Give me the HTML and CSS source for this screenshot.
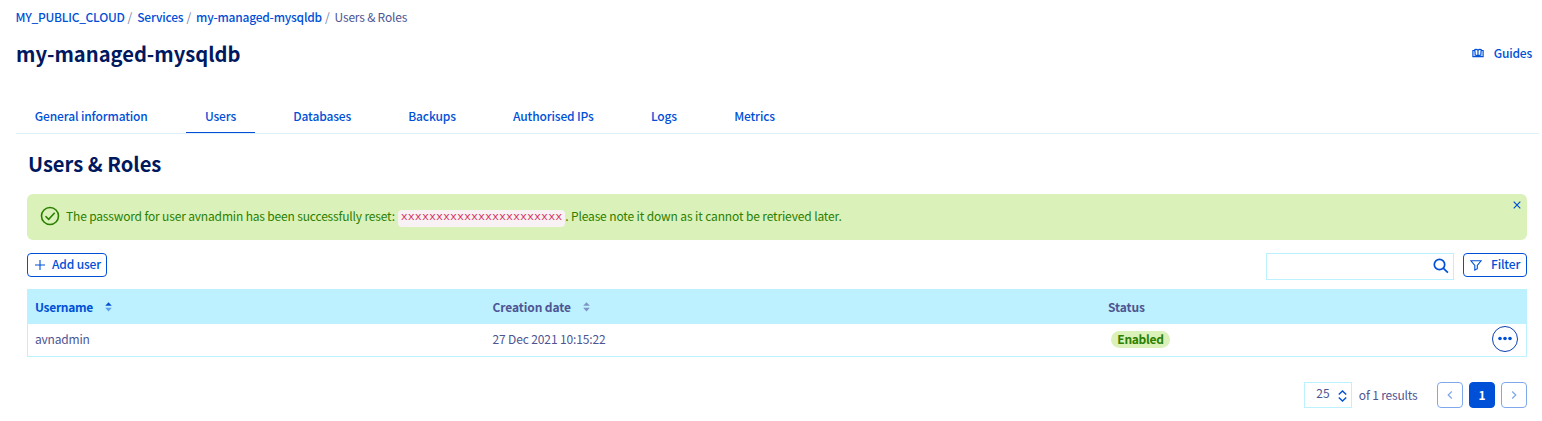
FILE: index.html
```html
<!DOCTYPE html>
<html lang="en">
<head>
<meta charset="utf-8">
<title>my-managed-mysqldb - Users &amp; Roles</title>
<link rel="stylesheet" href="styles.css">
</head>
<body>
<nav class="breadcrumb">
  <a class="crumb crumb-project">MY_PUBLIC_CLOUD</a><span class="sep">/</span>
  <a class="crumb crumb-services">Services</a><span class="sep">/</span>
  <a class="crumb crumb-db">my-managed-mysqldb</a><span class="sep">/</span>
  <span class="current">Users &amp; Roles</span>
</nav>
<header class="page-header">
  <h1>my-managed-mysqldb</h1>
  <a class="guides">
    <svg width="12" height="10" viewBox="0 0 12 10" fill="none" stroke="currentColor"><path d="M2.8 2.5H.9V8.6H11.1V2.5H9.2M3.2 7.2L2.8 1.6Q5 .8 6 2.4Q7 .8 9.2 1.6L8.8 7.2Q7 7 6 8.4Q5 7 3.2 7.2ZM6 2.2V8.4" stroke-width="1.2"/></svg>
    <span>Guides</span>
  </a>
</header>
<nav class="tabs">
  <a class="tab"><span>General information</span></a>
  <a class="tab active"><span>Users</span></a>
  <a class="tab"><span>Databases</span></a>
  <a class="tab"><span>Backups</span></a>
  <a class="tab"><span>Authorised IPs</span></a>
  <a class="tab"><span>Logs</span></a>
  <a class="tab"><span>Metrics</span></a>
</nav>
<main>
  <h2>Users &amp; Roles</h2>
  <div class="alert">
    <svg class="check" width="20" height="20" viewBox="0 0 20 20" fill="none" stroke="currentColor" stroke-width="1.6"><circle cx="10" cy="10" r="8.5"/><path d="M5.5 10.2l3.2 3.1 6-6.6"/></svg>
    <p><span class="msg-a">The password for user avnadmin has been successfully reset:</span><code>xxxxxxxxxxxxxxxxxxxxxxx</code><span class="msg-b">. Please note it down as it cannot be retrieved later.</span></p>
    <svg class="close" width="8" height="8" viewBox="0 0 8 8" stroke="currentColor" stroke-width="1.2"><path d="M.7.7l6.6 6.6M7.3.7L.7 7.3"/></svg>
  </div>
  <div class="toolbar">
    <button class="btn add"><svg width="10" height="10" viewBox="0 0 10 10" stroke="currentColor" stroke-width="1.1"><path d="M5 0v10M0 5h10"/></svg><span>Add user</span></button>
    <div class="search"><svg width="16" height="16" viewBox="0 0 16 16" fill="none" stroke="currentColor" stroke-width="1.7"><circle cx="6.5" cy="6.5" r="5.2"/><path d="M10.2 10.2l4.7 4.5"/></svg></div>
    <button class="btn filter"><svg width="12" height="11" viewBox="0 0 12 11" fill="none" stroke="currentColor" stroke-width="1.1"><path d="M.9.8h10.2L7.3 5.4v3.3L4.8 10V5.4Z"/></svg><span>Filter</span></button>
  </div>
  <div class="table">
    <div class="row head">
      <div class="cell sorted"><span class="th-user">Username</span><svg width="7" height="10" viewBox="0 0 7 10" fill="currentColor"><path d="M3.5.2L6.8 3.8H.2Z"/><path opacity=".5" d="M.2 5.8H6.8L3.5 9.4Z"/></svg></div>
      <div class="cell"><span class="th-date">Creation date</span><svg class="muted" width="7" height="10" viewBox="0 0 7 10" fill="currentColor"><path d="M3.5.2L6.8 3.8H.2ZM.2 5.8H6.8L3.5 9.4Z"/></svg></div>
      <div class="cell"><span class="th-status">Status</span></div>
      <div></div>
    </div>
    <div class="row body">
      <div class="cell"><span class="td-user">avnadmin</span></div>
      <div class="cell"><span class="td-date">27 Dec 2021 10:15:22</span></div>
      <div class="cell"><span class="badge">Enabled</span></div>
      <div class="actions"><svg width="26" height="26" viewBox="0 0 26 26"><circle cx="13" cy="13" r="12.5" fill="none" stroke="#0b3fae"/><g fill="#0050d7"><circle cx="8" cy="12.5" r="1.8"/><circle cx="13" cy="12.5" r="1.8"/><circle cx="18" cy="12.5" r="1.8"/></g></svg></div>
    </div>
  </div>
  <div class="pagination">
    <div class="select"><span>25</span><svg width="9" height="12" viewBox="0 0 9 12" fill="none" stroke="currentColor" stroke-width="1.4"><path d="M.8 4.6L4.5 1l3.7 3.6M.8 7.4L4.5 11l3.7-3.6"/></svg></div>
    <span class="total">of 1 results</span>
    <div class="page"><svg width="6" height="8" viewBox="0 0 6 8" fill="none" stroke="currentColor" stroke-width="1.2"><path d="M4.8.5L1.2 4l3.6 3.5"/></svg></div>
    <div class="page current-page">1</div>
    <div class="page"><svg width="6" height="8" viewBox="0 0 6 8" fill="none" stroke="currentColor" stroke-width="1.2"><path d="M1.2.5L4.8 4 1.2 7.5"/></svg></div>
  </div>
</main>
</body>
</html>
```
FILE: styles.css
```css
* { box-sizing: border-box; }
body {
  margin: 0;
  padding: 8px 15px 0 16px;
  background: #fff;
  color: #4d5592;
  font-family: "Noto Sans CJK SC", "Noto Sans", sans-serif;
  font-size: 12px;
  line-height: 18px;
}
h1, h2, p { margin: 0; }
svg { display: block; flex: none; }
.breadcrumb { display: flex; height: 18px; margin-left: -.5px; white-space: nowrap; letter-spacing: -.2px; }
.crumb { color: #0050d7; font-weight: 500; }
.crumb-project { letter-spacing: -.27px; }
.crumb-db { letter-spacing: -.23px; }
.sep { margin: 0 5.2px 0 3px; color: #7a80aa; }
.page-header { display: flex; justify-content: space-between; height: 56px; padding-top: 12px; }
h1, h2 { color: #00185e; font-size: 20.15px; line-height: 32px; font-weight: 700; }
.guides { display: flex; align-items: center; gap: 9.5px; height: 30px; margin-right: -5px; color: #0050d7; font-weight: 500; letter-spacing: -.2px; }
.tabs { display: flex; gap: 19.4px; height: 52px; margin-right: -12px; padding-top: 18px; border-bottom: 1px solid #e0f0fa; }
.tab { height: 33px; padding: 7px 19px 0 18.8px; color: #0050d7; font-weight: 500; letter-spacing: -.14px; white-space: nowrap; }
.tab.active { border-bottom: 1px solid #0050d7; }
main { padding-left: 11px; }
h2 { margin-top: 14px; padding-left: 1px; }
.alert { display: flex; align-items: center; height: 46px; margin-top: 14px; padding: 0 6px 0 13px; border-radius: 6px; background: #daf1b9; color: #2b8000; }
.check { margin-top: -2px; }
.alert p { display: flex; align-items: center; margin: -2px 0 0 6px; white-space: nowrap; }
.msg-a { letter-spacing: -.165px; }
.msg-b { letter-spacing: -.13px; }
.alert code { height: 17px; margin: 4px 0 0 3px; padding: 0 3px; border-radius: 4px; background: #f9f2f4; color: #d3335f; font: 11.7px/15px "Liberation Mono", monospace; }
.close { align-self: flex-start; margin: 7px 0 0 auto; color: #0050d7; }
.toolbar { display: flex; height: 28px; margin-top: 13px; }
.btn { display: flex; align-items: center; height: 24px; padding: 0; border: 1px solid #0050d7; border-radius: 4px; background: #fff; color: #0050d7; font: 500 12px/18px "Noto Sans CJK SC", "Noto Sans", sans-serif; letter-spacing: -.15px; white-space: nowrap; }
.btn span { margin-top: -2px; }
.add { width: 80px; padding-left: 7px; gap: 7px; }
.search { display: flex; justify-content: flex-end; width: 188px; height: 27px; margin-left: auto; padding: 4px 4px; border: 1px solid #bef1ff; color: #0050d7; }
.filter { width: 64px; margin-left: 9px; padding-left: 6px; gap: 9px; }
.table { margin-top: 8px; border: 1px solid #bef1ff; }
.row { display: grid; grid-template-columns: 457.5px 615.5px 1fr 34px; height: 32px; align-items: center; }
.row.head { height: 34px; background: #bef1ff; font-weight: 700; letter-spacing: -.1px; }
.row.head .cell > span { margin-top: -1px; }
.row.body { padding-bottom: 2px; }
.cell { display: flex; align-items: center; padding-left: 7px; gap: 12px; white-space: nowrap; }
.th-user { letter-spacing: -.3px; }
.td-user { letter-spacing: -.2px; }
.td-date { letter-spacing: -.13px; }
.sorted { color: #0050d7; }
.muted { color: #8093c5; }
.badge { margin-left: 3px; width: 59px; height: 17px; border-radius: 9px; background: #daf1b9; color: #2b8000; font-weight: 700; line-height: 16px; text-align: center; letter-spacing: -.3px; }
.pagination { display: flex; justify-content: flex-end; margin-top: 25px; height: 26px; align-items: center; }
.select { display: flex; width: 48px; height: 26px; padding: 1px 4px 0 11px; border: 1px solid #bef1ff; justify-content: space-between; }
.select svg { margin-top: 6px; color: #0050d7; }
.total { margin: 0 19.5px 0 6.5px; letter-spacing: -.17px; white-space: nowrap; }
.page { display: flex; align-items: center; justify-content: center; width: 26px; height: 26px; border: 1px solid #7fa7eb; border-radius: 4px; color: #7fa7eb; }
.page + .page { margin-left: 6px; }
.current-page { border-color: #0050d7; background: #0050d7; color: #fff; font-weight: 700; }
```
